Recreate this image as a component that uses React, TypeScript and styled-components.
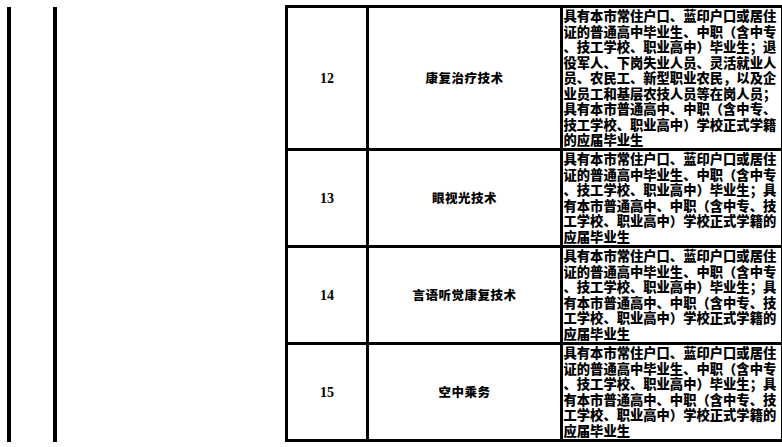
import React from 'react';
import styled, { createGlobalStyle } from 'styled-components';

const GlobalStyle = createGlobalStyle`
  html, body {
    margin: 0;
    padding: 0;
    background: #fff;
  }
  body {
    font-family: 'Liberation Serif', 'Noto Sans CJK SC', serif;
    color: #000;
  }
`;

const Sheet = styled.div`
  display: flex;
  align-items: flex-start;
  width: 782px;
  height: 447px;
  overflow: hidden;
`;

const Rail = styled.div<{ $left: number }>`
  flex: none;
  width: 4px;
  height: 435px;
  margin-top: 7px;
  margin-left: ${(p) => p.$left}px;
  background: #000;
`;

const Table = styled.table`
  flex: none;
  margin-left: 228px;
  margin-top: 5px;
  border-collapse: collapse;
  table-layout: fixed;
  width: 491px;
`;

const Cell = styled.td<{ $width: number }>`
  width: ${(p) => p.$width}px;
  border: 3.5px solid #000;
  padding: 0;
  vertical-align: middle;
  text-align: center;
`;

const Row = styled.tr<{ $height: number }>`
  height: ${(p) => p.$height}px;
`;

const Num = styled.span`
  font-family: 'Liberation Serif', serif;
  font-weight: 700;
  font-size: 14px;
`;

const Major = styled.span`
  font-family: 'Noto Sans CJK SC', sans-serif;
  font-weight: 900;
  font-size: 12.5px;
  letter-spacing: 0.5px;
`;

const Req = styled.div`
  text-align: left;
  font-family: 'Noto Sans CJK SC', sans-serif;
  font-weight: 900;
  font-size: 13.3px;
  line-height: 15.5px;
  padding-left: 0.5px;
`;

const Line = styled.div`
  white-space: nowrap;
  height: 15.5px;
`;

const longReq = [
  '具有本市常住户口、蓝印户口或居住',
  '证的普通高中毕业生、中职（含中专',
  '、技工学校、职业高中）毕业生；退',
  '役军人、下岗失业人员、灵活就业人',
  '员、农民工、新型职业农民，以及企',
  '业员工和基层农技人员等在岗人员；',
  '具有本市普通高中、中职（含中专、',
  '技工学校、职业高中）学校正式学籍',
  '的应届毕业生',
];

const shortReq = [
  '具有本市常住户口、蓝印户口或居住',
  '证的普通高中毕业生、中职（含中专',
  '、技工学校、职业高中）毕业生；具',
  '有本市普通高中、中职（含中专、技',
  '工学校、职业高中）学校正式学籍的',
  '应届毕业生',
];

const rows = [
  { no: 12, name: '康复治疗技术', req: longReq, height: 142 },
  { no: 13, name: '眼视光技术', req: shortReq, height: 97 },
  { no: 14, name: '言语听觉康复技术', req: shortReq, height: 97 },
  { no: 15, name: '空中乘务', req: shortReq, height: 97 },
];

export default function App() {
  return (
    <>
      <GlobalStyle />
      <Sheet>
        <Rail $left={7} />
        <Rail $left={42} />
        <Table>
          <tbody>
            {rows.map((row) => (
              <Row key={row.no} $height={row.height}>
                <Cell $width={78}>
                  <Num>{row.no}</Num>
                </Cell>
                <Cell $width={191}>
                  <Major>{row.name}</Major>
                </Cell>
                <Cell $width={218}>
                  <Req>
                    {row.req.map((line, i) => (
                      <Line key={i}>{line}</Line>
                    ))}
                  </Req>
                </Cell>
              </Row>
            ))}
          </tbody>
        </Table>
      </Sheet>
    </>
  );
}
